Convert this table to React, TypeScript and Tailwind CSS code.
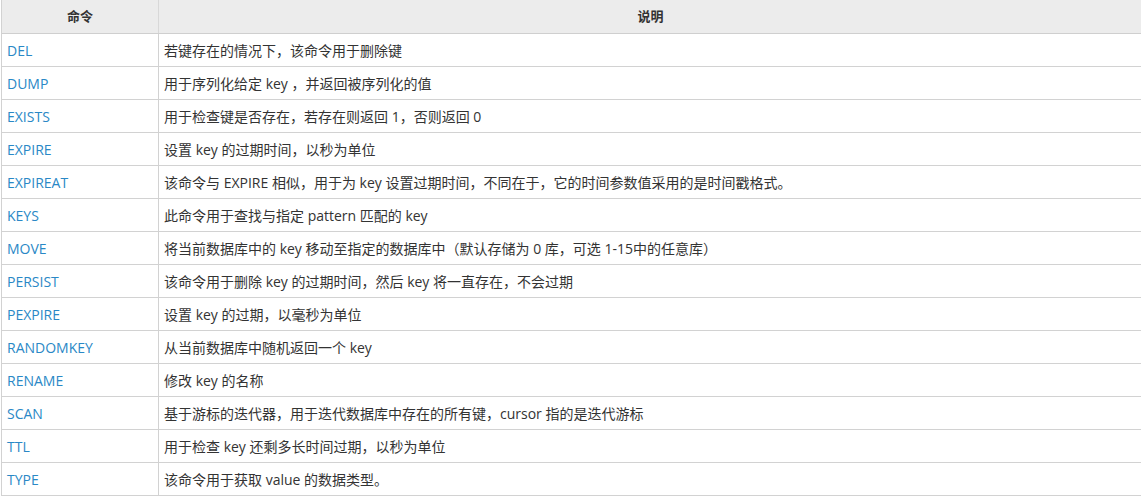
import React from "react";

const rows: [string, string][] = [
  ["DEL", "若键存在的情况下，该命令用于删除键"],
  ["DUMP", "用于序列化给定 key ，并返回被序列化的值"],
  ["EXISTS", "用于检查键是否存在，若存在则返回 1，否则返回 0"],
  ["EXPIRE", "设置 key 的过期时间，以秒为单位"],
  ["EXPIREAT", "该命令与 EXPIRE 相似，用于为 key 设置过期时间，不同在于，它的时间参数值采用的是时间戳格式。"],
  ["KEYS", "此命令用于查找与指定 pattern 匹配的 key"],
  ["MOVE", "将当前数据库中的 key 移动至指定的数据库中（默认存储为 0 库，可选 1-15中的任意库）"],
  ["PERSIST", "该命令用于删除 key 的过期时间，然后 key 将一直存在，不会过期"],
  ["PEXPIRE", "设置 key 的过期，以毫秒为单位"],
  ["RANDOMKEY", "从当前数据库中随机返回一个 key"],
  ["RENAME", "修改 key 的名称"],
  ["SCAN", "基于游标的迭代器，用于迭代数据库中存在的所有键，cursor 指的是迭代游标"],
  ["TTL", "用于检查 key 还剩多长时间过期，以秒为单位"],
  ["TYPE", "该命令用于获取 value 的数据类型。"],
];

export default function App() {
  return (
    <div
      className="w-[1141px] h-[496px] overflow-hidden bg-white pl-px"
      style={{ fontFamily: '"Open Sans", "Noto Sans CJK SC", sans-serif' }}
    >
      <div className="w-[1150px] border-l border-[#d2d2d2]">
        <div className="flex h-[34px] border-b border-[#cfcfcf] bg-[#ececec] text-[13px] font-bold text-[#333]">
          <div className="w-[157px] border-r border-[#d8d8d8] flex items-center justify-center">命令</div>
          <div className="w-[983px] flex items-center justify-center">说明</div>
        </div>
        {rows.map(([cmd, desc]) => (
          <div key={cmd} className="flex h-[33px] border-b border-[#d2d2d2] text-[14px]">
            <div className="w-[157px] border-r border-[#d2d2d2] flex items-center pl-[5px] text-[#2a88c6]">{cmd}</div>
            <div className="flex-1 flex items-center pl-[5px] text-[#333]">{desc}</div>
          </div>
        ))}
      </div>
    </div>
  );
}
